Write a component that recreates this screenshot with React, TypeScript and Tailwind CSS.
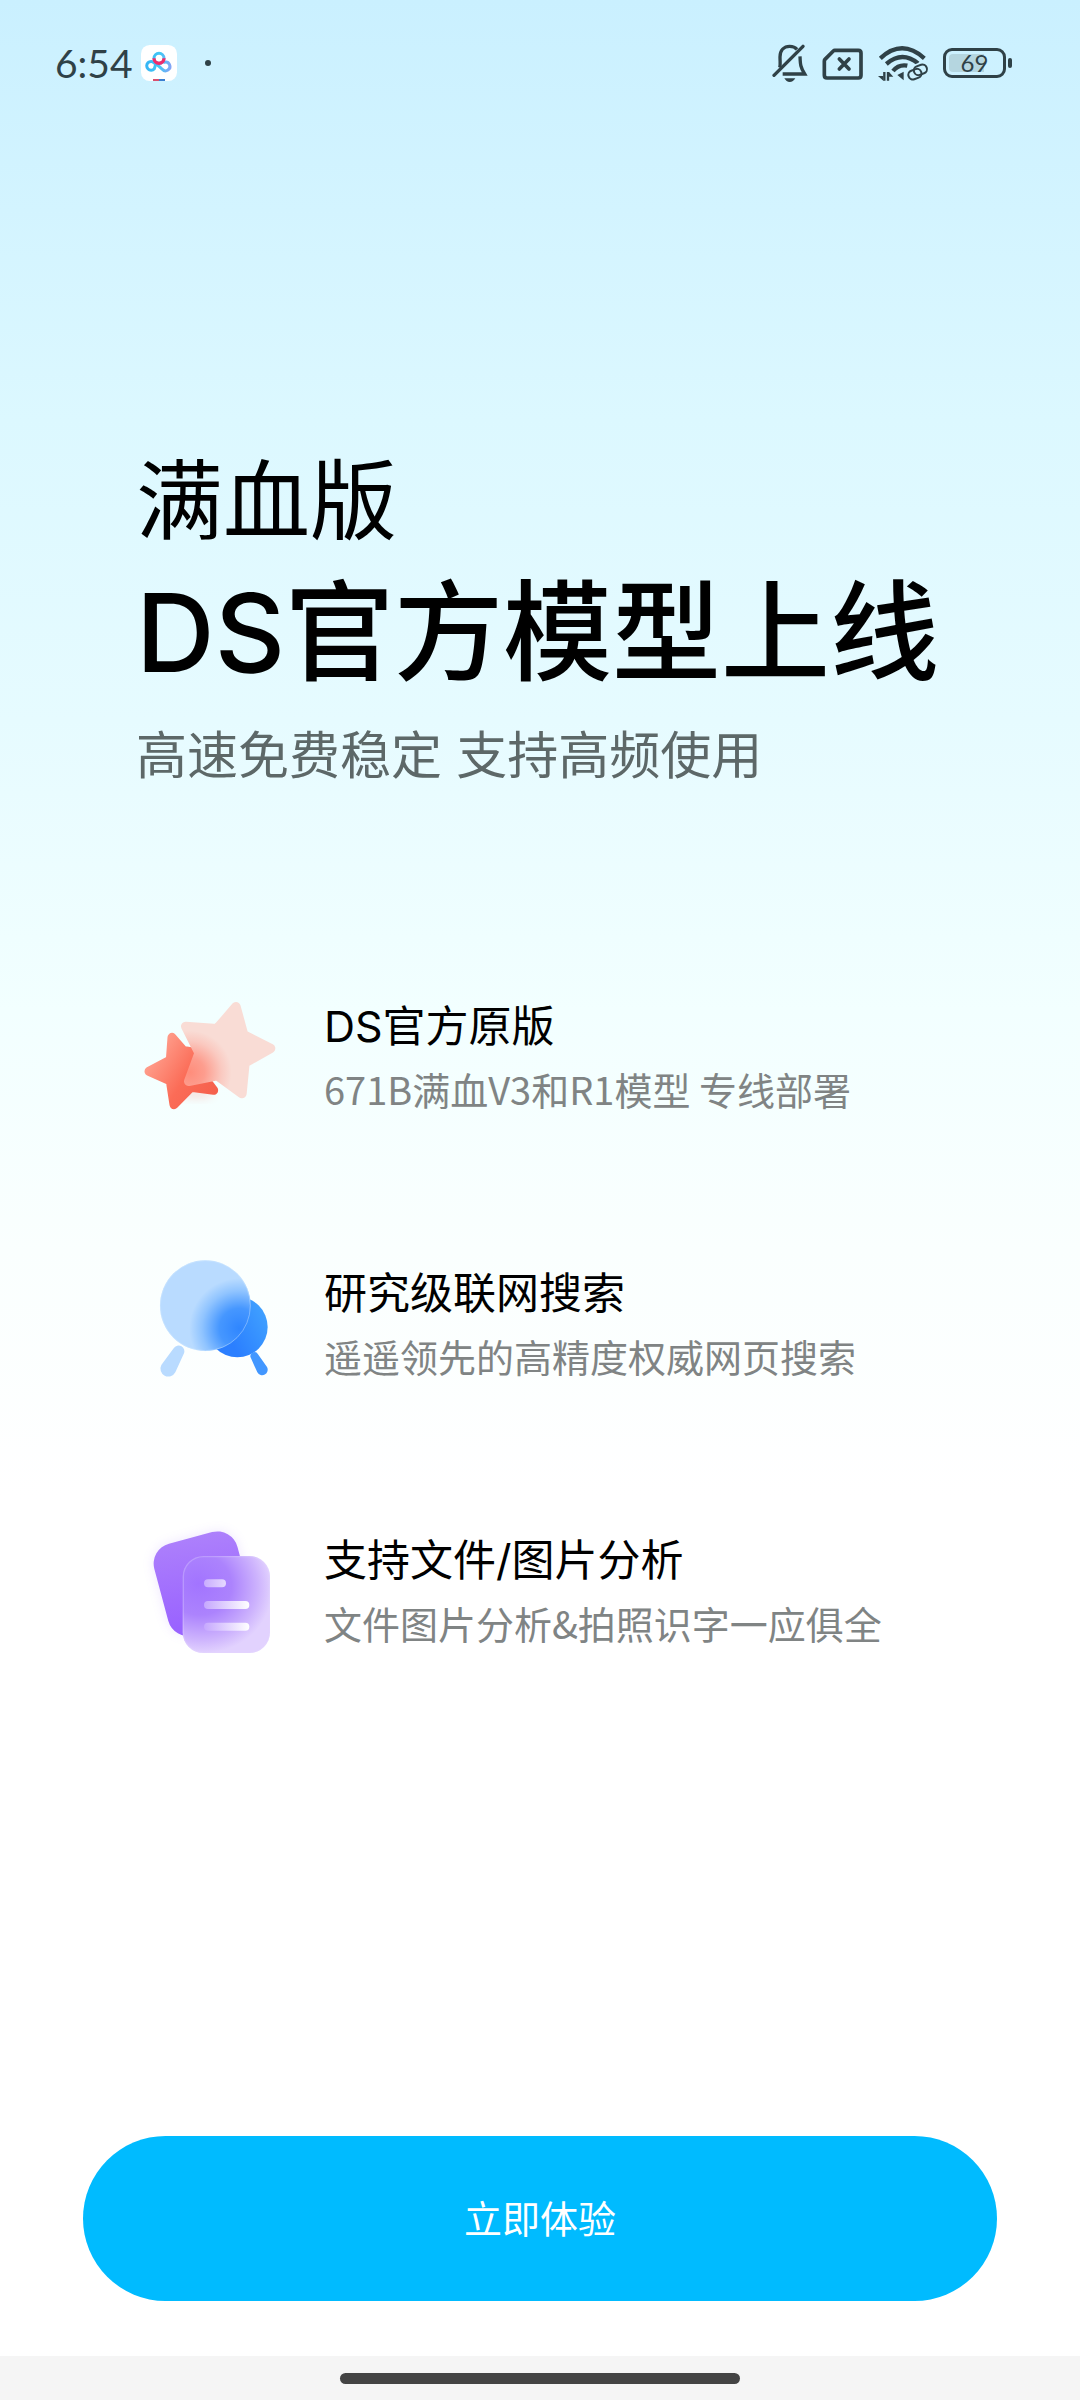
import React from 'react';

function AppBadge() {
  return (
    <svg width="36" height="36" viewBox="300 45 108 108" aria-hidden="true">
      <defs>
        <linearGradient id="cloud" gradientUnits="userSpaceOnUse" x1="314" y1="100" x2="394" y2="110">
          <stop offset="0" stopColor="#35b4f5" />
          <stop offset="0.5" stopColor="#43c8f5" />
          <stop offset="1" stopColor="#8aa0f5" />
        </linearGradient>
      </defs>
      <rect x="300" y="45" width="108" height="108" rx="26" fill="#fff" />
      <g fill="none" stroke="url(#cloud)" strokeWidth="9" strokeLinecap="round">
        <circle cx="354" cy="85" r="15" />
        <path d="M344 103 L340 116 A13 13 0 1 1 340 99" />
        <path d="M338 97 C346 100 352 108 364 118 A13 13 0 1 0 370 97" />
      </g>
      <path d="M339 85 A15 15 0 0 0 369 85" fill="none" stroke="#ee2d6b" strokeWidth="10" />
      <path d="M336 147h18v6h-18z" fill="#d9506f" />
      <path d="M354 147h18v6h-18z" fill="#3a7fd0" />
    </svg>
  );
}

function BellOffIcon() {
  return (
    <svg width="36" height="40" viewBox="64 40 108 120" aria-hidden="true">
      <g fill="none" stroke="#2f4147" strokeWidth="10">
        <path d="M87 114 C90 106 88 98 88 82 C88 62 100 50 117 50 C126 50 134 53 139 59" />
        <path d="M70 137 L157 50" strokeLinecap="round" />
        <path d="M148 80 C149 104 149 112 162 133 H96" />
      </g>
      <path d="M101 146 H134 Q128 157 117 157 Q107 157 101 146Z" fill="#2f4147" />
    </svg>
  );
}

function SimOffIcon() {
  return (
    <svg width="42" height="40" viewBox="214 40 126 120" aria-hidden="true">
      <path
        d="M252 62 H323 Q331 62 331 70 V137 Q331 145 323 145 H229 Q221 145 221 137 V94 Q221 91 223 89 L248 64 Q250 62 252 62Z"
        fill="none"
        stroke="#2f4147"
        strokeWidth="11"
      />
      <path d="M266 88 L295 118 M295 88 L266 118" stroke="#2f4147" strokeWidth="11" strokeLinecap="round" />
    </svg>
  );
}

function WifiIcon() {
  return (
    <svg width="51" height="40" viewBox="380 40 153 120" aria-hidden="true">
      <g fill="none" stroke="#2f4147">
        <path d="M387 86 Q452 26 519 86" strokeWidth="13" />
        <path d="M405 103 Q452 62 500 101" strokeWidth="13" />
        <path d="M425 124 Q442 103 468 108" strokeWidth="13" />
        <path d="M399 127 V153 M410 153 V127" strokeWidth="7" />
      </g>
      <path d="M380 139 L396 139 L396 153Z M413 127 L426 141 L413 141Z M438 136 L457 126 V152Z" fill="#2f4147" />
      {/* link badge, with a clear edge around it */}
      <g fill="none" stroke="#cdf2ff" strokeWidth="16">
        <rect x="487" y="107" width="40" height="27" rx="13" transform="rotate(-20 507 120)" />
        <rect x="471" y="120" width="40" height="27" rx="13" transform="rotate(-20 491 134)" />
      </g>
      <g fill="none" stroke="#2f4147" strokeWidth="6">
        <rect x="487" y="107" width="40" height="27" rx="13" transform="rotate(-20 507 120)" />
        <rect x="471" y="120" width="40" height="27" rx="13" transform="rotate(-20 491 134)" />
      </g>
    </svg>
  );
}

function Battery({ level }: { level: number }) {
  return (
    <div className="flex items-center gap-0.5">
      <div className="relative flex h-[30px] w-[63px] items-center justify-center rounded-[9px] border-[3px] border-[#2f4147]">
        <div className="absolute inset-[3px] overflow-hidden rounded-sm">
          <div className="h-full bg-[#b5d6e0]" style={{ width: `${level}%` }} />
        </div>
        <span className="relative font-[Lato,sans-serif] text-2xl leading-6 text-[#2f4147]">{level}</span>
      </div>
      <div className="h-[10px] w-1 rounded-sm bg-[#2f4147]" />
    </div>
  );
}

function StarsIcon() {
  return (
    <svg width="144" height="144" viewBox="24 18 432 432" aria-hidden="true">
      <defs>
        <linearGradient id="starRed" gradientUnits="userSpaceOnUse" x1="60" y1="230" x2="250" y2="350">
          <stop offset="0" stopColor="#ffa08e" />
          <stop offset="0.55" stopColor="#fb6c57" />
          <stop offset="1" stopColor="#f5604c" />
        </linearGradient>
        <radialGradient id="starGlass" gradientUnits="userSpaceOnUse" cx="180" cy="280" r="125">
          <stop offset="0" stopColor="#ff8d7b" />
          <stop offset="0.35" stopColor="#fd9d8e" />
          <stop offset="0.75" stopColor="#fac9c0" />
          <stop offset="1" stopColor="#f9dcd5" />
        </radialGradient>
        <filter id="starBlur" x="-50%" y="-50%" width="200%" height="200%">
          <feGaussianBlur stdDeviation="12" />
        </filter>
      </defs>
      <ellipse cx="200" cy="345" rx="50" ry="14" fill="#f5604c" opacity="0.18" filter="url(#starBlur)" />
      <path
        d="M126 175 L160 214 L182 218 L214 285 L251 334 L183 325 L132 377 L121 306 L57 277 L121 243Z"
        fill="url(#starRed)"
        stroke="url(#starRed)"
        strokeWidth="27"
        strokeLinejoin="round"
      />
      <path
        d="M318 83 L341 167 L422 208 L345 252 L336 344 L262 290 L176 307 L207 222 L167 142 L261 149Z"
        fill="url(#starGlass)"
        stroke="url(#starGlass)"
        strokeWidth="28"
        strokeLinejoin="round"
      />
    </svg>
  );
}

function SearchOrbIcon() {
  return (
    <svg width="144" height="144" viewBox="24 39 432 432" aria-hidden="true">
      <defs>
        <linearGradient id="orbBlue" gradientUnits="userSpaceOnUse" x1="300" y1="300" x2="412" y2="240">
          <stop offset="0" stopColor="#2b7fff" />
          <stop offset="1" stopColor="#3f9fff" />
        </linearGradient>
        <radialGradient id="orbGlass" gradientUnits="userSpaceOnUse" cx="328" cy="268" r="150">
          <stop offset="0" stopColor="#2f86ff" />
          <stop offset="0.4" stopColor="#4697ff" />
          <stop offset="0.75" stopColor="#90c4ff" />
          <stop offset="1" stopColor="#b9dbff" />
        </radialGradient>
      </defs>
      <circle cx="322" cy="264" r="91" fill="url(#orbBlue)" />
      <circle cx="226" cy="200" r="136" fill="url(#orbGlass)" />
      <circle cx="226" cy="200" r="135" fill="none" stroke="#d5eaff" strokeWidth="3" opacity="0.4" />
      <path d="M131 328 A17 17 0 0 1 161 345 L136 400 A23 23 0 0 1 94 378Z" fill="#b9dbff" />
      <path d="M363 358 A12 12 0 0 1 384 346 L411 384 A16 16 0 0 1 382 400Z" fill="#4297ff" />
    </svg>
  );
}

function FilesIcon() {
  return (
    <svg width="144" height="144" viewBox="24 30 432 432" aria-hidden="true">
      <defs>
        <linearGradient id="fileBack" gradientUnits="userSpaceOnUse" x1="200" y1="70" x2="160" y2="380">
          <stop offset="0" stopColor="#b085fb" />
          <stop offset="1" stopColor="#9a63ff" />
        </linearGradient>
        <radialGradient
          id="fileGlass"
          gradientUnits="userSpaceOnUse"
          cx="0"
          cy="0"
          r="1"
          gradientTransform="translate(205 225) rotate(20) scale(225 205)"
        >
          <stop offset="0" stopColor="#a274ff" />
          <stop offset="0.45" stopColor="#ac83fd" />
          <stop offset="0.8" stopColor="#cdb3fd" />
          <stop offset="1" stopColor="#e2d2fe" />
        </radialGradient>
        <linearGradient id="fileLine" gradientUnits="userSpaceOnUse" x1="222" y1="0" x2="358" y2="0">
          <stop offset="0" stopColor="#c6a8fe" />
          <stop offset="1" stopColor="#ffffff" />
        </linearGradient>
        <linearGradient id="fileLineShort" gradientUnits="userSpaceOnUse" x1="222" y1="0" x2="288" y2="0">
          <stop offset="0" stopColor="#c9adfe" />
          <stop offset="1" stopColor="#e6d9ff" />
        </linearGradient>
        <filter id="fileBlur" x="-50%" y="-50%" width="200%" height="200%">
          <feGaussianBlur stdDeviation="18" />
        </filter>
      </defs>
      <rect x="57" y="120" width="258" height="280" rx="62" transform="rotate(-15 57 120)" fill="#a274ff" opacity="0.18" filter="url(#fileBlur)" />
      <rect x="57" y="120" width="258" height="285" rx="62" transform="rotate(-15 57 120)" fill="url(#fileBack)" />
      <rect x="158" y="141" width="262" height="291" rx="62" fill="url(#fileGlass)" />
      <rect x="160" y="143" width="258" height="287" rx="60" fill="none" stroke="#e4d6ff" strokeWidth="4" opacity="0.3" />
      <rect x="222" y="211" width="66" height="24" rx="12" fill="url(#fileLineShort)" />
      <g fill="url(#fileLine)">
        <rect x="222" y="276" width="136" height="24" rx="12" />
        <rect x="222" y="341" width="136" height="24" rx="12" />
      </g>
    </svg>
  );
}

const features = [
  { icon: StarsIcon, title: 'DS官方原版', desc: '671B满血V3和R1模型 专线部署' },
  { icon: SearchOrbIcon, title: '研究级联网搜索', desc: '遥遥领先的高精度权威网页搜索' },
  { icon: FilesIcon, title: '支持文件/图片分析', desc: '文件图片分析&拍照识字一应俱全' },
];

export default function App() {
  return (
    <div
      lang="zh-CN"
      className="flex min-h-screen flex-col bg-white bg-[linear-gradient(180deg,#caf0ff_0px,#dcf8ff_420px,#e6fbff_720px,#f2ffff_1010px,#fafffe_1250px,#ffffff_1500px)] font-['Noto_Sans_CJK_SC',sans-serif]"
    >
      <header className="flex h-[126px] items-center justify-between pr-[68px] pl-[55px]">
        <div className="flex items-center gap-2">
          <span className="font-[Lato,sans-serif] text-[39px] leading-10 text-[#2f4147]">6:54</span>
          <AppBadge />
          <span className="ml-5 h-1.5 w-1.5 rounded-full bg-[#2f4147]" />
        </div>
        <div className="flex items-center gap-3.5">
          <BellOffIcon />
          <SimOffIcon />
          <WifiIcon />
          <Battery level={69} />
        </div>
      </header>

      <main className="flex flex-1 flex-col">
        <div className="px-[136px] pt-[320px] font-[Inter,'Noto_Sans_CJK_SC',sans-serif]">
          <h1 className="text-black">
            <span className="block text-[87px] leading-[112px]">满血版</span>
            <span className="mt-2 block text-[109px] leading-[132px] font-medium whitespace-nowrap">DS官方模型上线</span>
          </h1>
          <p className="mt-[26px] text-[51px] leading-[64px] text-[#5d6868]">高速免费稳定 支持高频使用</p>
        </div>

        <ul className="mt-[197px] flex flex-col gap-[123px] px-[138px]">
          {features.map(({ icon: Icon, title, desc }) => (
            <li key={title} className="flex items-center gap-[42px]">
              <Icon />
              <div className="whitespace-nowrap">
                <h2 className="font-[Inter,'Noto_Sans_CJK_SC',sans-serif] text-[43px] leading-[64px] text-black">{title}</h2>
                <p className="text-[38px] leading-[62px] text-[#808484]">{desc}</p>
              </div>
            </li>
          ))}
        </ul>

        <div className="mt-auto px-[83px] pb-[55px]">
          <button type="button" className="h-[165px] w-full rounded-full bg-[#00bbff] pb-1 text-[38px] text-white">
            立即体验
          </button>
        </div>
      </main>

      <footer className="flex h-11 items-center justify-center bg-[#f5f5f5]">
        <div className="h-[11px] w-[400px] rounded-full bg-[#444444]" />
      </footer>
    </div>
  );
}
